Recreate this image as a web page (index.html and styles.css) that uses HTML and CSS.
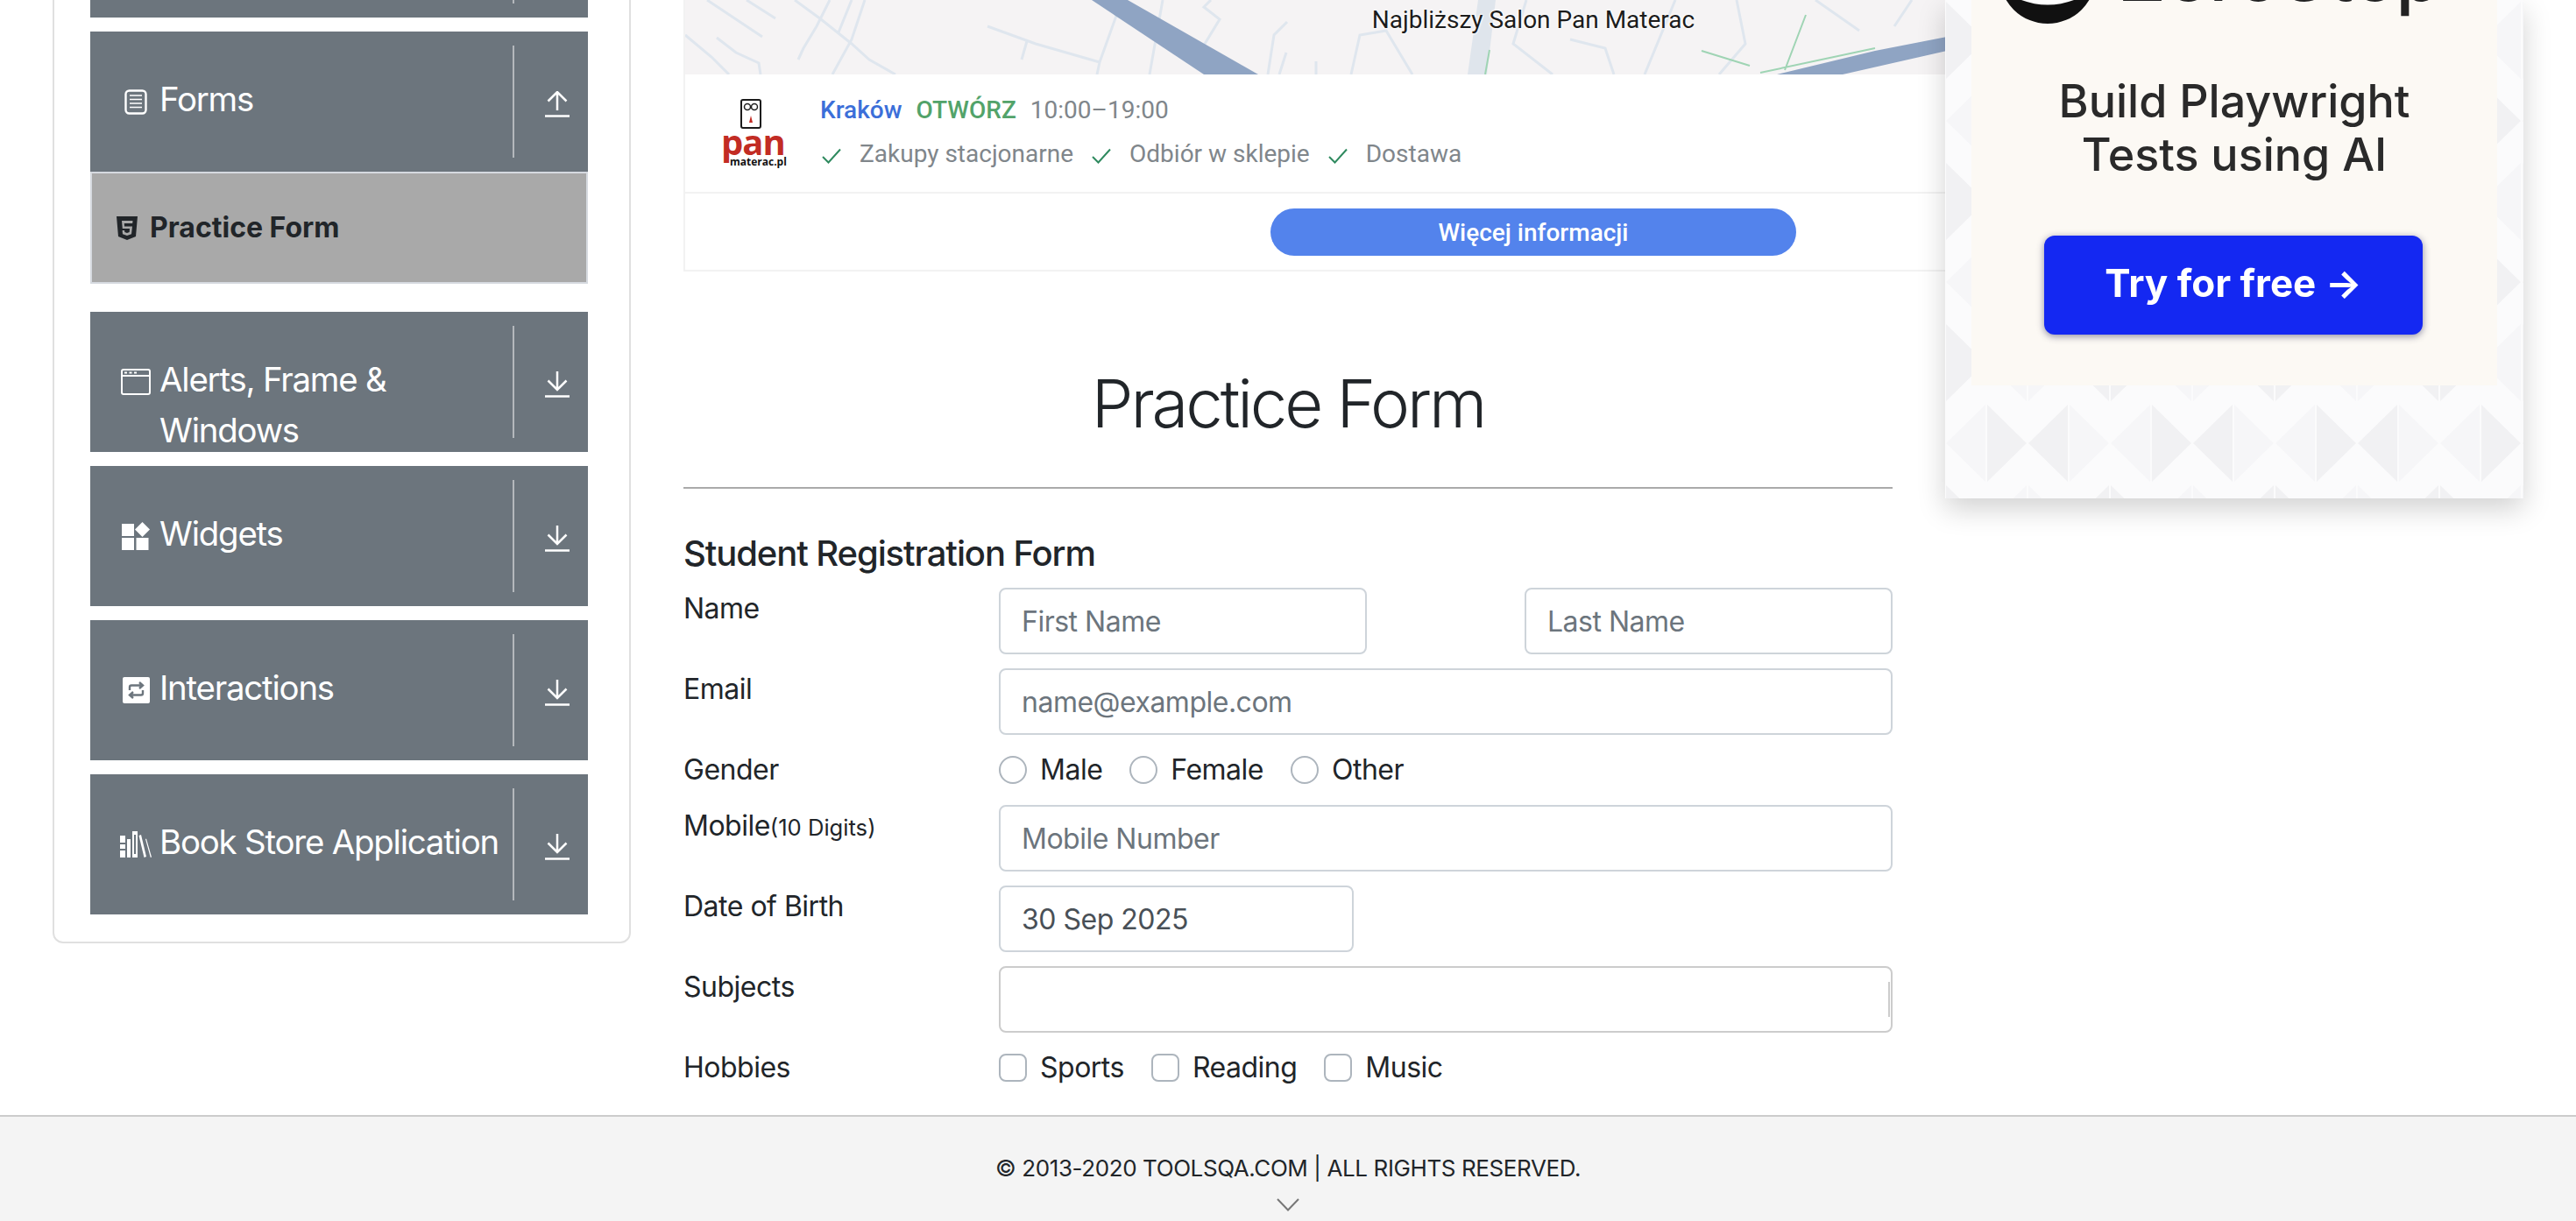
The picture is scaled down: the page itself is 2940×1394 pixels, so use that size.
FILE: index.html
```html
<!DOCTYPE html>
<html lang="en">
<head>
    <meta charset="UTF-8">
    <meta name="viewport" content="width=device-width, initial-scale=1.0">
    <title>Practice Form</title>
    <link rel="stylesheet" href="styles.css">
</head>
<body>
    <svg class="defs" width="0" height="0">
        <symbol id="arrow-down" viewBox="0 0 28 30">
            <path d="M14 0V21M3.500 10.500L14 21L24.500 10.500M0 28.500H28" fill="none" stroke="#fff" stroke-width="2.500"/>
        </symbol>
        <symbol id="arrow-up" viewBox="0 0 28 30">
            <path d="M14 22V1M3.500 11.500L14 1L24.500 11.500M0 28.500H28" fill="none" stroke="#fff" stroke-width="2.500"/>
        </symbol>
        <symbol id="check" viewBox="0 0 22 18">
            <path d="M1 10L7.500 16.500L21 1.500" fill="none" stroke="#2f8a5f" stroke-width="2"/>
        </symbol>
    </svg>

    <div class="wrapper">
        <!-- Menu lateral -->
        <aside class="sidebar">
            <div class="group">
                <div class="group-header">
                    <div class="header-text"></div>
                    <div class="header-arrow"><svg class="arrow"><use href="#arrow-down"/></svg></div>
                </div>
            </div>
            <div class="group">
                <div class="group-header">
                    <div class="header-text">
                        <span class="header-icon">
                            <svg width="26" height="29" viewBox="0 0 26 29"><rect x="1.500" y="1.500" width="23" height="26" rx="4" fill="none" stroke="#fff" stroke-width="2.400"/><path d="M6 7H20M6 11.500H20M6 16H20M6 20.500H20" stroke="#fff" stroke-width="1.600"/></svg>
                        </span>
                        <span>Forms</span>
                    </div>
                    <div class="header-arrow"><svg class="arrow"><use href="#arrow-up"/></svg></div>
                </div>
                <div class="menu-item">
                    <svg width="24" height="27" viewBox="0 0 24 27"><path fill-rule="evenodd" d="M0 0H24L22 23L12 27L2 23ZM6 5L6.800 14H15L14.700 18L12 19L9.300 18L9.100 16H6.600L7 20.300L12 22L17 20.300L18 11.500H9L8.800 8H18.200L18.500 5Z" fill="#212529"/></svg>
                    <span>Practice Form</span>
                </div>
            </div>
            <div class="group">
                <div class="group-header">
                    <div class="header-text">
                        <span class="header-icon">
                            <svg width="34" height="30" viewBox="0 0 34 30"><rect x="1" y="1" width="32" height="28" rx="2" fill="none" stroke="#fff" stroke-width="2"/><path d="M1 8H33" stroke="#fff" stroke-width="2"/><path d="M4 4.500H7M9.500 4.500H12.500M15 4.500H18" stroke="#fff" stroke-width="2"/></svg>
                        </span>
                        <span>Alerts, Frame &amp; Windows</span>
                    </div>
                    <div class="header-arrow"><svg class="arrow"><use href="#arrow-down"/></svg></div>
                </div>
            </div>
            <div class="group">
                <div class="group-header">
                    <div class="header-text">
                        <span class="header-icon">
                            <svg width="32" height="32" viewBox="0 0 32 32" fill="#fff"><rect x="0" y="2" width="14" height="14"/><rect x="0" y="18" width="14" height="14"/><rect x="16.500" y="18" width="14" height="14"/><path d="M23.500 0L32 8.500L23.500 17L15 8.500Z"/></svg>
                        </span>
                        <span>Widgets</span>
                    </div>
                    <div class="header-arrow"><svg class="arrow"><use href="#arrow-down"/></svg></div>
                </div>
            </div>
            <div class="group">
                <div class="group-header">
                    <div class="header-text">
                        <span class="header-icon">
                            <svg width="31" height="30" viewBox="0 0 31 30"><rect width="31" height="30" rx="2" fill="#fff"/><path d="M8 15V11.500Q8 9.500 10 9.500H22M19 6L23 9.500L19 13M23 15V18.500Q23 20.500 21 20.500H9M12 17L8 20.500L12 24" fill="none" stroke="#6c757d" stroke-width="2.400"/></svg>
                        </span>
                        <span>Interactions</span>
                    </div>
                    <div class="header-arrow"><svg class="arrow"><use href="#arrow-down"/></svg></div>
                </div>
            </div>
            <div class="group">
                <div class="group-header">
                    <div class="header-text">
                        <span class="header-icon">
                            <svg width="36" height="30" viewBox="0 0 36 30" fill="#fff"><path d="M0 5H6V13H0ZM0 15H6V20H0ZM0 22H6V30H0Z"/><path d="M8 9H12V30H8Z"/><path d="M14 0H20V30H14ZM16 4V26H18V4Z" fill-rule="evenodd"/><path d="M21.500 5L24 4L30 29L27.500 30Z"/><path d="M29 9L30 8.500L36 29.500L34.800 30Z"/></svg>
                        </span>
                        <span>Book Store Application</span>
                    </div>
                    <div class="header-arrow"><svg class="arrow"><use href="#arrow-down"/></svg></div>
                </div>
            </div>
        </aside>

        <main class="content">
            <!-- Anuncio del salon -->
            <section class="store-ad">
                <div class="map">
                    <svg class="map-lines" viewBox="0 0 1440 85" preserveAspectRatio="none">
                        <g fill="none" stroke="#dfe6ee" stroke-width="3">
                            <path d="M25 0L55 20L88 42M70 0L103 21M0 40L30 65L50 85M36 43L58 60L84 72L86 85"/>
                            <path d="M125 0L155 22L190 50L210 68L240 85M165 0L150 30L135 55L129 68M190 0L175 37M205 0L190 45L168 85"/>
                            <path d="M345 30L400 50L473 71M390 47L384 68M473 71L492 18M473 71L470 85M530 85L545 0"/>
                            <path d="M600 0L592 8L610 22L590 55M687 25L672 40L665 85M686 60L678 85M720 70L720 85"/>
                            <path d="M760 85L770 40L800 35L830 85M960 0L945 50L990 85M1010 45L1050 55L1060 85M1130 0L1095 85M1200 0L1210 50L1180 85M1290 0L1340 35M1400 0L1380 30"/>
                        </g>
                        <path d="M905 0H925L915 85H893Z" fill="#dfe5ec"/>
                        <path d="M464 0H505L654 85H592Z" fill="#8fa4c3"/>
                        <path d="M1246 85L1358 58L1440 42V58L1321 85Z" fill="#8fa4c3"/>
                        <g fill="none" stroke="#9fd4b4" stroke-width="2">
                            <path d="M1160 58L1215 75M1227 83L1358 55M1279 17L1255 80M918 57L913 85"/>
                        </g>
                    </svg>
                    <span class="map-label">Najbliższy Salon Pan Materac</span>
                </div>
                <div class="store-row">
                    <div class="store-logo">
                        <svg class="store-face" width="24" height="34" viewBox="0 0 24 34"><rect x="1" y="1" width="22" height="32" rx="2" fill="#fff" stroke="#1b1b1b" stroke-width="2"/><circle cx="8" cy="9" r="3.500" fill="#fff" stroke="#222" stroke-width="1.500"/><circle cx="16" cy="9" r="3.500" fill="#fff" stroke="#222" stroke-width="1.500"/><path d="M12 19L14 27H10Z" fill="#c22c24"/></svg>
                        <span class="logo-pan">pan</span>
                        <span class="logo-site">materac.pl</span>
                    </div>
                    <div class="store-info">
                        <div class="store-line">
                            <span class="store-city">Kraków</span>
                            <span class="store-open">OTWÓRZ</span>
                            <span class="store-hours">10:00–19:00</span>
                        </div>
                        <div class="store-line store-services">
                            <svg class="check"><use href="#check"/></svg><span>Zakupy stacjonarne</span>
                            <svg class="check"><use href="#check"/></svg><span>Odbiór w sklepie</span>
                            <svg class="check"><use href="#check"/></svg><span>Dostawa</span>
                        </div>
                    </div>
                </div>
                <div class="store-action">
                    <button class="store-button">Więcej informacji</button>
                </div>
            </section>

            <h1 class="page-title">Practice Form</h1>
            <hr class="title-rule">
            <h5 class="form-title">Student Registration Form</h5>

            <form class="form">
                <div class="form-row">
                    <label class="form-label">Name</label>
                    <div class="name-fields">
                        <input class="form-control" type="text" placeholder="First Name">
                        <input class="form-control" type="text" placeholder="Last Name">
                    </div>
                </div>
                <div class="form-row">
                    <label class="form-label">Email</label>
                    <input class="form-control" type="text" placeholder="name@example.com">
                </div>
                <div class="form-row">
                    <label class="form-label">Gender</label>
                    <div class="choices">
                        <label class="choice"><input class="radio" type="radio" name="gender">Male</label>
                        <label class="choice"><input class="radio" type="radio" name="gender">Female</label>
                        <label class="choice"><input class="radio" type="radio" name="gender">Other</label>
                    </div>
                </div>
                <div class="form-row">
                    <label class="form-label">Mobile<small class="label-note">(10 Digits)</small></label>
                    <input class="form-control" type="text" placeholder="Mobile Number">
                </div>
                <div class="form-row">
                    <label class="form-label">Date of Birth</label>
                    <input class="form-control date-input" type="text" value="30 Sep 2025">
                </div>
                <div class="form-row">
                    <label class="form-label">Subjects</label>
                    <div class="subjects-input"><span class="subjects-bar"></span></div>
                </div>
                <div class="form-row">
                    <label class="form-label">Hobbies</label>
                    <div class="choices">
                        <label class="choice"><input class="checkbox" type="checkbox">Sports</label>
                        <label class="choice"><input class="checkbox" type="checkbox">Reading</label>
                        <label class="choice"><input class="checkbox" type="checkbox">Music</label>
                    </div>
                </div>
            </form>
        </main>
    </div>

    <footer class="footer">
        <span>© 2013-2020 TOOLSQA.COM | ALL RIGHTS RESERVED.</span>
        <svg class="footer-chevron" width="26" height="15" viewBox="0 0 26 15"><path d="M1 1L13 13.500L25 1" fill="none" stroke="#777" stroke-width="2"/></svg>
    </footer>

    <!-- Banner derecho, encima del anuncio -->
    <aside class="banner">
        <svg class="banner-pattern" width="660" height="569">
            <defs>
                <pattern id="tri" width="188" height="184" patternUnits="userSpaceOnUse">
                    <path d="M1 2L46 46L1 90ZM187 2L142 46L187 90ZM48 94L93 138L48 182ZM140 94L95 138L140 182Z" fill="#f1f1f3"/>
                    <path d="M93 2L48 46L93 90ZM95 2L140 46L95 90ZM46 94L1 138L46 182ZM142 94L187 138L142 182Z" fill="#f6f6f8"/>
                </pattern>
            </defs>
            <rect width="660" height="569" fill="#fbfbfc"/>
            <rect width="660" height="569" fill="url(#tri)"/>
        </svg>
        <div class="banner-panel">
            <div class="banner-logo">
                <svg width="110" height="110" viewBox="0 0 110 110"><circle cx="55" cy="55" r="55" fill="#111"/><path d="M25 83Q55 94 85 83V60H25Z" fill="#fff"/></svg>
                <span class="banner-brand">ZeroStep</span>
            </div>
            <p class="banner-text">Build Playwright<br>Tests using AI</p>
            <a class="banner-button">Try for free →</a>
        </div>
    </aside>
</body>
</html>
```

FILE: styles.css
```css
* {
    box-sizing: border-box;
}

body {
    margin: 0;
    height: 1394px;
    overflow: hidden;
    display: flex;
    flex-direction: column;
    position: relative;
    font-family: Inter, "Liberation Sans", sans-serif;
    font-size: 32px;
    line-height: 48px;
    letter-spacing: -0.5px;
    color: #212529;
    background-color: #fff;
}

.defs {
    position: absolute;
}

.wrapper {
    flex: 1;
    display: flex;
    min-height: 0;
    overflow: hidden;
    padding-left: 60px;
}

/* Menu lateral */
.sidebar {
    width: 660px;
    height: 1219px;
    margin-top: -142px;
    padding: 0 47px 32px 41px;
    border: 2px solid #e0e0e0;
    border-radius: 12px;
    display: flex;
    flex-direction: column;
    flex-shrink: 0;
    gap: 16px;
}

.group-header {
    height: 160px;
    padding: 16px 0;
    display: flex;
    background-color: #6c757d;
    color: #fff;
    font-size: 38.4px;
    line-height: 57.6px;
    letter-spacing: -1.2px;
    overflow: hidden;
}

.header-text {
    width: 482px;
    padding: 33px 0 0 25px;
    display: flex;
    align-items: flex-start;
}

.header-icon {
    width: 54px;
    height: 57.6px;
    padding-top: 5px;
    flex-shrink: 0;
    display: flex;
    align-items: center;
    justify-content: center;
}

.header-arrow {
    flex: 1;
    border-left: 2px solid #b4b8bc;
    padding: 6px 0 0 35px;
    display: flex;
    align-items: center;
}

.arrow {
    width: 28px;
    height: 30px;
}

.menu-item {
    height: 128px;
    padding-left: 28px;
    margin-bottom: 16px;
    border: 2px solid #d6dae0;
    background-color: #a9a9a9;
    display: flex;
    align-items: center;
    gap: 14px;
    font-weight: 700;
    letter-spacing: normal;
}

/* Anuncio del salon */
.content {
    width: 1380px;
    margin-left: 60px;
    flex-shrink: 0;
}

.store-ad {
    width: 1938px;
    height: 310px;
    border-left: 2px solid #f2f2f2;
    border-bottom: 2px solid #f2f2f2;
    font-family: Roboto, "Liberation Sans", sans-serif;
    font-size: 28px;
    line-height: 38px;
    letter-spacing: normal;
}

.map {
    height: 85px;
    position: relative;
    background-color: #f5f3f4;
    display: flex;
    justify-content: center;
}

.map-lines {
    position: absolute;
    left: 0;
    top: 0;
    width: 1440px;
    height: 85px;
}

.map-label {
    position: relative;
    line-height: 46px;
    color: #1c1c1c;
    text-shadow: 0 0 3px #fff, 0 0 3px #fff, 0 0 3px #fff;
}

.store-row {
    height: 136px;
    padding-left: 43px;
    border-bottom: 2px solid #f2f2f2;
    display: flex;
}

.store-logo {
    width: 111px;
    height: 100%;
    position: relative;
    padding-top: 28px;
    display: flex;
    flex-direction: column;
    color: #c22c24;
}

.store-face {
    margin-left: 20px;
    flex-shrink: 0;
}

.logo-pan {
    font-family: "Open Sans", sans-serif;
    font-size: 40px;
    font-weight: 700;
    line-height: 32px;
    margin: -1px 0 0 -2px;
    letter-spacing: -1px;
}

.logo-site {
    position: absolute;
    left: 8px;
    top: 92px;
    font-family: "Open Sans", sans-serif;
    font-size: 12px;
    font-weight: 700;
    line-height: 16px;
    letter-spacing: normal;
    color: #111;
}

.store-info {
    padding-top: 22px;
}

.store-line {
    display: flex;
    align-items: center;
    gap: 16px;
}

.store-city {
    font-weight: 500;
    color: #3c6fd9;
}

.store-open {
    font-weight: 500;
    color: #52a36a;
}

.store-hours {
    color: #80868b;
}

.store-services {
    margin-top: 12px;
    color: #80868b;
    gap: 21px;
}

.check {
    width: 22px;
    height: 18px;
    margin-left: 2px;
    margin-top: 4px;
}

.store-services span {
    margin-right: -2px;
}

.store-action {
    padding-top: 17px;
    display: flex;
    justify-content: center;
}

.store-button {
    width: 600px;
    height: 54px;
    border: none;
    border-radius: 27px;
    background-color: #5383ec;
    color: #fff;
    font-family: Roboto, "Liberation Sans", sans-serif;
    font-size: 28px;
    font-weight: 500;
}

/* Formulario */
.page-title {
    margin: 102px 0 0;
    text-align: center;
    font-size: 76px;
    font-weight: 300;
    line-height: 96px;
    letter-spacing: -3.1px;
}

.title-rule {
    margin: 48px 0 50px;
    height: 2px;
    border: none;
    background-color: #aaa;
}

.form-title {
    margin: 0 0 15px;
    font-size: 40px;
    font-weight: 500;
    line-height: 48px;
    letter-spacing: -1.1px;
}

.form-row {
    display: flex;
    margin-bottom: 16px;
}

.form-label {
    width: 360px;
    flex-shrink: 0;
}

.label-note {
    font-size: 25.600px;
    letter-spacing: normal;
}

.name-fields {
    flex: 1;
    display: flex;
    justify-content: space-between;
}

.name-fields .form-control {
    flex: none;
    width: 420px;
}

.form-control {
    flex: 1;
    min-width: 0;
    height: 76px;
    padding: 12px 24px;
    border: 2px solid #ced4da;
    border-radius: 8px;
    font-family: inherit;
    font-size: 32px;
    letter-spacing: -0.5px;
    color: #495057;
}

.form-control::placeholder {
    color: #6c757d;
    opacity: 1;
}

.date-input {
    flex: none;
    width: 405px;
}

.subjects-input {
    flex: 1;
    height: 76px;
    border: 2px solid #ccc;
    border-radius: 8px;
    display: flex;
    justify-content: flex-end;
    align-items: center;
}

.subjects-bar {
    width: 2px;
    height: 40px;
    margin-right: 1px;
    background-color: #ccc;
}

.choices {
    display: flex;
    gap: 31px;
}

.choice {
    display: flex;
    align-items: center;
    gap: 15px;
}

.radio, .checkbox {
    appearance: none;
    width: 32px;
    height: 32px;
    margin: 0;
    border: 2px solid #adb5bd;
    background-color: #fff;
}

.radio {
    border-radius: 50%;
}

.checkbox {
    border-radius: 8px;
}

.footer {
    height: 121px;
    padding-top: 38px;
    border-top: 2px solid #ccc;
    background-color: #f4f4f4;
    display: flex;
    flex-direction: column;
    align-items: center;
    font-size: 26px;
    line-height: 42px;
    letter-spacing: -0.4px;
}

.footer-chevron {
    margin-top: 13px;
    flex-shrink: 0;
}

/* Banner */
.banner {
    position: absolute;
    left: 2220px;
    top: 0;
    width: 660px;
    height: 569px;
    padding: 0 30px;
    letter-spacing: normal;
    box-shadow: 0 12px 30px rgba(0, 0, 0, 0.18);
}

.banner-pattern {
    position: absolute;
    left: 0;
    top: 0;
}

.banner-panel {
    position: relative;
    height: 440px;
    overflow: hidden;
    background-color: #fcf9f4;
    text-align: center;
    filter: blur(0.7px);
}

.banner-logo {
    margin-top: -83px;
    height: 110px;
    padding-left: 32px;
    display: flex;
    gap: 26px;
}

.banner-brand {
    margin-top: 4px;
    font-size: 84px;
    font-weight: 500;
    line-height: 100px;
    color: #222;
}

.banner-text {
    margin: 58px 0 0;
    font-size: 52px;
    font-weight: 500;
    line-height: 61px;
    color: #2a2a2a;
}

.banner-button {
    width: 432px;
    height: 113px;
    margin: 62px 0 0 83px;
    padding-bottom: 6px;
    border-radius: 12px;
    background-color: #1428f2;
    box-shadow: 0 2px 8px rgba(0, 0, 60, 0.45);
    display: flex;
    align-items: center;
    justify-content: center;
    font-size: 44px;
    font-weight: 700;
    color: #fff;
}
```
